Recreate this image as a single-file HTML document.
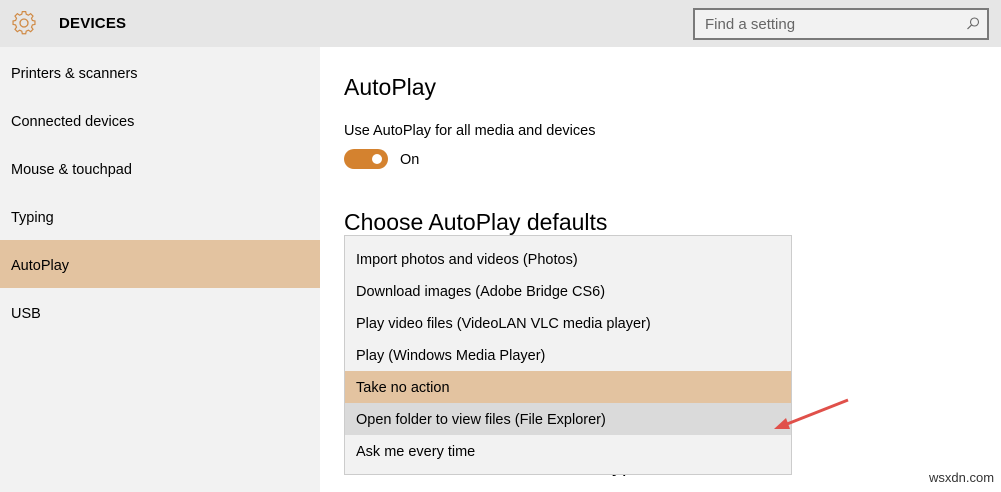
<!DOCTYPE html>
<html><head><meta charset="utf-8"><style>
*{margin:0;padding:0;box-sizing:border-box}
body{width:1001px;height:492px;overflow:hidden;background:#fff;font-family:"Liberation Sans",sans-serif;color:#000;position:relative}
.hdr{position:absolute;left:0;top:0;width:1001px;height:47px;background:#e6e6e6}
.title{position:absolute;left:59px;top:15px;font-size:15px;font-weight:bold;letter-spacing:0.2px}
.search{position:absolute;left:693px;top:8px;width:296px;height:32px;border:2px solid #7a7a7a;background:#f2f2f2}
.search span{position:absolute;left:10px;top:6px;font-size:15px;color:#666}
.side{position:absolute;left:0;top:47px;width:320px;height:445px;background:#f2f2f2}
.si{position:absolute;left:0;width:320px;height:48px;padding-left:11px;line-height:48px;font-size:14.5px}
.sel{background:#e3c3a0}
.h1{position:absolute;left:344px;font-size:23px;font-weight:normal}
.t{position:absolute;font-size:14.5px}
.tog{position:absolute;left:344px;top:149px;width:44px;height:20px;border-radius:10px;background:#d4822f}
.tog:after{content:"";position:absolute;right:6px;top:5px;width:10px;height:10px;border-radius:5px;background:#fff}
.dd{position:absolute;left:344px;top:235px;width:448px;height:240px;background:#f2f2f2;border:1px solid #ccc}
.di{position:absolute;left:0;width:446px;height:32px;line-height:32px;padding-left:11px;font-size:14.5px}
</style></head><body>
<div class="hdr">
<svg style="position:absolute;left:10px;top:9px" width="28" height="28" viewBox="-14 -14 28 28"><path fill="none" stroke="#d08a45" stroke-width="1.4" d="M-2,-11 L2,-11 L2.6,-8 L5.2,-6.8 L7.8,-8.6 L10.6,-5.8 L8.8,-3.2 L9.9,-0.6 L12.9,0 L12.9,4 L9.9,4.6 L8.8,7.2 L10.6,9.8 L7.8,12.6 L5.2,10.8 L2.6,12 L2,15 L-2,15 L-2.6,12 L-5.2,10.8 L-7.8,12.6 L-10.6,9.8 L-8.8,7.2 L-9.9,4.6 L-12.9,4 L-12.9,0 L-9.9,-0.6 L-8.8,-3.2 L-10.6,-5.8 L-7.8,-8.6 L-5.2,-6.8 L-2.6,-8 Z" transform="translate(0,-2) scale(0.85)"/><circle cx="0" cy="0" r="4" fill="none" stroke="#d08a45" stroke-width="1.3"/></svg>
<div class="title">DEVICES</div>
<div class="search"><span>Find a setting</span>
<svg style="position:absolute;right:6px;top:6px" width="16" height="16" viewBox="0 0 16 16"><circle cx="9.5" cy="6" r="4" fill="none" stroke="#666" stroke-width="1.1"/><path d="M6.7,8.8 L2.5,13" stroke="#666" stroke-width="1.2"/></svg></div>
</div>
<div class="side">
<div class="si" style="top:3px">Printers &amp; scanners</div>
<div class="si" style="top:51px">Connected devices</div>
<div class="si" style="top:99px">Mouse &amp; touchpad</div>
<div class="si" style="top:147px">Typing</div>
<div class="si sel" style="top:193px;line-height:52px">AutoPlay</div>
<div class="si" style="top:243px">USB</div>
</div>
<div class="h1" style="top:74px">AutoPlay</div>
<div class="t" style="left:344px;top:123px">Use AutoPlay for all media and devices</div>
<div class="tog"></div>
<div class="t" style="left:400px;top:152px">On</div>
<div class="h1" style="top:209px">Choose AutoPlay defaults</div>
<div class="h1" style="top:455px;font-size:20px">Choose what to do with each type of media</div>
<div class="dd">
<div class="di" style="top:8px">Import photos and videos (Photos)</div>
<div class="di" style="top:40px">Download images (Adobe Bridge CS6)</div>
<div class="di" style="top:72px">Play video files (VideoLAN VLC media player)</div>
<div class="di" style="top:104px">Play (Windows Media Player)</div>
<div class="di" style="top:135px;background:#e3c3a0;line-height:34px">Take no action</div>
<div class="di" style="top:167px;background:#dadada;line-height:34px">Open folder to view files (File Explorer)</div>
<div class="di" style="top:200px">Ask me every time</div>
</div>
<svg style="position:absolute;left:760px;top:390px" width="100" height="50"><path d="M88,10 L22,36" stroke="#e0504a" stroke-width="3"/><path d="M14,39 L26,28 L30,39 Z" fill="#e0504a"/></svg>
<div class="t" style="left:929px;top:470px;font-size:13px;color:#333">wsxdn.com</div>
</body></html>
